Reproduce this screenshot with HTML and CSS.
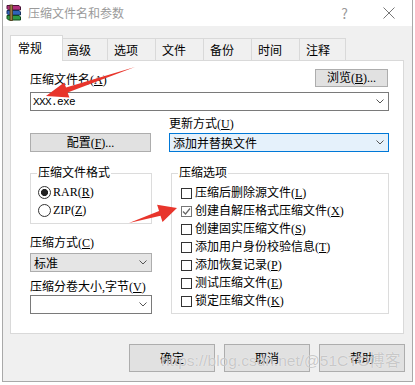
FILE: index.html
```html
<!DOCTYPE html>
<html lang="zh-CN">
<head>
    <meta charset="UTF-8">
    <title>压缩文件名和参数</title>
    <link rel="stylesheet" href="styles.css">
</head>
<body>
    <div class="window">
        <div class="titlebar">
            <svg class="app-icon" width="17" height="17" viewBox="0 0 17 17">
                <path d="M2 1.5h12l1.5 1.5v3H3.5L2 4.5z" fill="#b0307c" stroke="#4a1436" stroke-width="1"/>
                <path d="M2 6.5h12l1.5 1.5v3H3.5L2 9.5z" fill="#2f63b8" stroke="#15305e" stroke-width="1"/>
                <path d="M2 11.5h12l1.5 1.5v3H3.5L2 14.5z" fill="#2f9a45" stroke="#124a1d" stroke-width="1"/>
                <rect x="5" y="1" width="2.5" height="15.5" fill="#9a7a45" stroke="#4d3817" stroke-width="0.8"/>
            </svg>
            <span class="title">压缩文件名和参数</span>
            <span class="help">?</span>
            <svg class="close" width="12" height="12" viewBox="0 0 12 12">
                <path d="M0.5 0.5l11 11M11.5 0.5l-11 11" stroke="#777" stroke-width="1"/>
            </svg>
        </div>

        <div class="client">
            <div class="tabs">
                <div class="tab active">常规</div>
                <div class="tab tab-narrow">高级</div>
                <div class="tab">选项</div>
                <div class="tab">文件</div>
                <div class="tab">备份</div>
                <div class="tab">时间</div>
                <div class="tab tab-last">注释</div>
            </div>

            <div class="panel">
                <div class="row-name">
                    <span class="lbl">压缩文件名(<u>A</u>)</span>
                    <div class="btn btn-browse">浏览(<u>B</u>)...</div>
                </div>
                <div class="combo combo-name">
                    <span class="mono">XXX.exe</span>
                    <svg class="chevron" width="8" height="5" viewBox="0 0 8 5"><path d="M0.5 0.5l3.5 3.5 3.5-3.5" fill="none" stroke="#555"/></svg>
                </div>

                <div class="row-mid">
                    <div class="btn btn-config">配置(<u>F</u>)...</div>
                    <div class="update">
                        <span class="lbl">更新方式(<u>U</u>)</span>
                        <div class="combo combo-update">
                            <span>添加并替换文件</span>
                            <svg class="chevron" width="8" height="5" viewBox="0 0 8 5"><path d="M0.5 0.5l3.5 3.5 3.5-3.5" fill="none" stroke="#555"/></svg>
                        </div>
                    </div>
                </div>

                <div class="row-main">
                    <div class="col-left">
                        <fieldset class="group group-format">
                            <legend class="lbl">压缩文件格式</legend>
                            <div class="opt"><span class="radio checked"></span><span class="lbl">RAR(<u>R</u>)</span></div>
                            <div class="opt"><span class="radio"></span><span class="lbl">ZIP(<u>Z</u>)</span></div>
                        </fieldset>
                        <div class="lbl field-lbl">压缩方式(<u>C</u>)</div>
                        <div class="combo combo-method">
                            <span>标准</span>
                            <svg class="chevron" width="8" height="5" viewBox="0 0 8 5"><path d="M0.5 0.5l3.5 3.5 3.5-3.5" fill="none" stroke="#555"/></svg>
                        </div>
                        <div class="lbl field-lbl field-lbl-2">压缩分卷大小,字节(<u>V</u>)</div>
                        <div class="combo combo-volume">
                            <span></span>
                            <svg class="chevron" width="8" height="5" viewBox="0 0 8 5"><path d="M0.5 0.5l3.5 3.5 3.5-3.5" fill="none" stroke="#555"/></svg>
                        </div>
                    </div>

                    <fieldset class="group group-options">
                        <legend class="lbl">压缩选项</legend>
                        <div class="opt"><span class="check"></span><span class="lbl">压缩后删除源文件(<u>L</u>)</span></div>
                        <div class="opt"><span class="check checked"><svg width="9" height="9" viewBox="0 0 9 9"><path d="M1 4.5l2.5 2.5 4.5-5.5" fill="none" stroke="#666" stroke-width="1.2"/></svg></span><span class="lbl">创建自解压格式压缩文件(<u>X</u>)</span></div>
                        <div class="opt"><span class="check"></span><span class="lbl">创建固实压缩文件(<u>S</u>)</span></div>
                        <div class="opt"><span class="check"></span><span class="lbl">添加用户身份校验信息(<u>T</u>)</span></div>
                        <div class="opt"><span class="check"></span><span class="lbl">添加恢复记录(<u>P</u>)</span></div>
                        <div class="opt"><span class="check"></span><span class="lbl">测试压缩文件(<u>E</u>)</span></div>
                        <div class="opt"><span class="check"></span><span class="lbl">锁定压缩文件(<u>K</u>)</span></div>
                    </fieldset>
                </div>
            </div>

            <div class="actions">
                <div class="btn btn-action">确定</div>
                <div class="btn btn-action">取消</div>
                <div class="btn btn-action">帮助</div>
            </div>
        </div>
    </div>

    <span class="watermark">https://blog.csdn.net/@51CTO博客</span>

    <svg class="arrows" width="415" height="385" viewBox="0 0 415 385">
        <polygon points="135,67 67.6,92.4 69.4,97.6 46,96 64.2,82.4 66,87.6" fill="#e8352c"/>
        <polygon points="129,223 160.5,215.8 162.5,222 177,208 157.1,204.8 159.1,211" fill="#e8352c"/>
    </svg>
</body>
</html>
```

FILE: styles.css
```css
* {
    box-sizing: border-box;
}

body {
    position: relative;
    margin: 0;
    background: #fff;
    font-family: "Noto Sans CJK SC", sans-serif;
    font-size: 12px;
    color: #000;
}

.window {
    display: flex;
    flex-direction: column;
    width: 411px;
    height: 382px;
    margin-left: 2px;
    border: 1px solid #a9a9a9;
    border-top: none;
    background: #f0f0f0;
}

.titlebar {
    display: flex;
    align-items: center;
    height: 26px;
    padding-left: 2px;
    background: #fff;
}

.app-icon {
    margin-top: -1px;
}

.title {
    margin-left: 6px;
    color: #9a9a9a;
    line-height: 16px;
}

.help {
    margin-left: auto;
    color: #9a9a9a;
    font-size: 14px;
    line-height: 16px;
}

.close {
    margin-left: 35px;
    margin-right: 17px;
}

.client {
    flex: 1;
    padding: 9px 8px 0 7px;
}

/* tabs */

.tabs {
    display: flex;
    align-items: flex-end;
    height: 25px;
}

.tab {
    display: flex;
    align-items: center;
    width: 49px;
    height: 22px;
    margin-left: -1px;
    padding-left: 6px;
    border: 1px solid #d9d9d9;
    border-bottom: none;
    background: #f0f0f0;
    line-height: 14px;
}

.tab.active {
    position: relative;
    z-index: 1;
    width: 53px;
    height: 26px;
    margin-left: 0;
    margin-bottom: -1px;
    padding-left: 7px;
    padding-bottom: 2px;
    background: #fff;
}

.tab-narrow {
    width: 46px;
    padding-left: 4px;
}

.tab-last {
    width: 47px;
}

/* panel */

.panel {
    height: 274px;
    padding: 8px 14px 0 19px;
    border: 1px solid #d9d9d9;
    background: #fff;
}

.lbl {
    font-family: "Liberation Serif", "Noto Sans CJK SC", serif;
    font-size: 12px;
    line-height: 14px;
}

.lbl u {
    text-underline-offset: 1px;
}

.row-name {
    display: flex;
    justify-content: space-between;
    align-items: flex-end;
    height: 18px;
}

.btn {
    display: flex;
    align-items: center;
    justify-content: center;
    border: 1px solid #adadad;
    background: #e1e1e1;
    line-height: 14px;
}

.btn-browse {
    width: 73px;
    height: 18px;
    margin-right: 1px;
    font-family: "Liberation Serif", "Noto Sans CJK SC", serif;
}

.combo {
    display: flex;
    align-items: center;
    justify-content: space-between;
    height: 19px;
    padding: 0 4px 0 2px;
    border: 1px solid #7a7a7a;
    background: #fff;
    line-height: 14px;
}

.combo-name {
    margin-top: 5px;
}

.mono {
    font-family: "Liberation Mono", monospace;
    font-size: 11px;
    letter-spacing: -0.6px;
}

.row-mid {
    display: flex;
    align-items: flex-end;
    justify-content: space-between;
    margin-top: 6px;
}

.btn-config {
    width: 121px;
    height: 19px;
    font-family: "Liberation Serif", "Noto Sans CJK SC", serif;
}

.update {
    display: flex;
    flex-direction: column;
    gap: 2px;
    width: 220px;
}

.combo-update {
    padding-left: 3px;
    border-color: #0078d7;
    background: #e5f1fb;
}

.row-main {
    display: flex;
    justify-content: space-between;
    margin-top: 14px;
}

.col-left {
    width: 122px;
}

.group {
    margin: 0;
    border: 1px solid #dcdcdc;
}

.group legend {
    padding: 0 1px;
}

.group-format {
    padding: 3px 0 4px 7px;
}

.group-format legend {
    margin-left: -1px;
}

.group-options {
    width: 218px;
    padding: 4px 0 3px 9px;
}

.group-options legend {
    margin-left: -3px;
}

.opt {
    display: flex;
    align-items: center;
    height: 18px;
}

.radio {
    width: 13px;
    height: 13px;
    margin-right: 2px;
    border: 1px solid #333;
    border-radius: 50%;
    background: #fff;
}

.radio.checked {
    background: radial-gradient(circle, #222 0 3.3px, #fff 3.8px);
}

.check {
    display: flex;
    align-items: center;
    justify-content: center;
    width: 11px;
    height: 11px;
    margin-right: 3px;
    border: 1px solid #333;
    background: #fff;
}

.check.checked {
    border-color: #777;
}

.field-lbl {
    margin-top: 12px;
}

.field-lbl-2 {
    margin-top: 8px;
}

.combo-method {
    margin-top: 3px;
    padding-left: 3px;
    border-color: #adadad;
    background: #e5e5e5;
}

.combo-volume {
    margin-top: 1px;
}

/* bottom buttons */

.actions {
    display: flex;
    justify-content: flex-end;
    gap: 9px;
    margin-top: 10px;
    margin-right: -1px;
}

.btn-action {
    width: 86px;
    height: 28px;
}

/* overlays */

.watermark {
    position: absolute;
    left: 161px;
    top: 351px;
    font-family: "Liberation Sans", sans-serif;
    font-size: 15.5px;
    line-height: 20px;
    color: rgba(150, 150, 150, 0.5);
    text-shadow: 0 0 1px #fff;
    white-space: nowrap;
}

.arrows {
    position: absolute;
    left: 0;
    top: 0;
    pointer-events: none;
}
```
